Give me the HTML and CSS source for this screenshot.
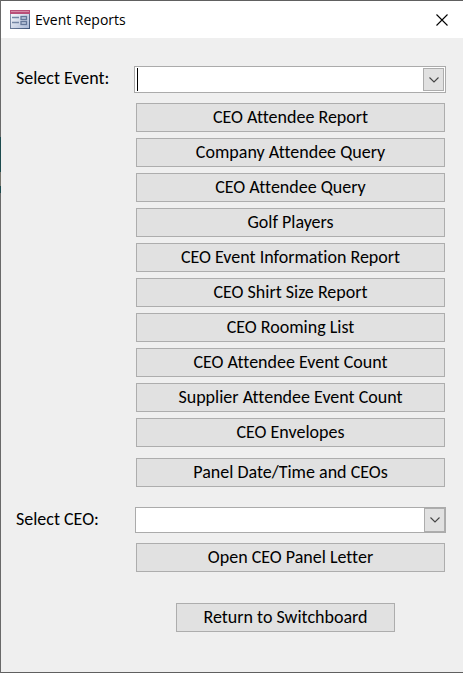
FILE: index.html
```
<!DOCTYPE html>
<html lang="en">
<head>
    <meta charset="utf-8">
    <meta name="viewport" content="width=device-width, initial-scale=1.0">
    <title>Event Reports</title>
    <link rel="stylesheet" href="styles.css">
</head>
<body>

<div class="window">
    <header class="titlebar">
        <svg class="form-icon" width="20" height="19" viewBox="0 0 20 19" aria-hidden="true">
            <defs>
                <linearGradient id="paper" x1="0" y1="0" x2="1" y2="1">
                    <stop offset="0" stop-color="#ffffff"/>
                    <stop offset="1" stop-color="#a9b8d6"/>
                </linearGradient>
                <linearGradient id="frame" x1="0" y1="0" x2="1" y2="1">
                    <stop offset="0" stop-color="#93a1b8"/>
                    <stop offset="1" stop-color="#3f5478"/>
                </linearGradient>
            </defs>
            <rect x="0.5" y="0.5" width="19" height="18" fill="url(#paper)" stroke="url(#frame)"/>
            <rect x="0" y="0" width="20" height="4" fill="#b94f78"/>
            <rect x="1" y="1" width="18" height="1" fill="#d58aa6"/>
            <path d="M2 7.5h7M2 12.5h7" stroke="#7486a5" stroke-width="1.5"/>
            <rect x="11" y="6.5" width="5.5" height="3" fill="#b8c4da" stroke="#647799" stroke-width="1.3"/>
            <rect x="11" y="11.5" width="5.5" height="3" fill="#b8c4da" stroke="#647799" stroke-width="1.3"/>
        </svg>
        <h1>Event Reports</h1>
        <button type="button" class="close" aria-label="Close">
            <svg width="12" height="12" viewBox="0 0 12 12"><path d="M0.5 0.5l11 11M11.5 0.5l-11 11" fill="none" stroke="#000" stroke-width="1.1"/></svg>
        </button>
    </header>

    <form class="reports">
        <label for="event">Select Event:</label>
        <div class="combo combo-active">
            <select id="event"><option></option></select>
            <span class="arrow"><svg width="10" height="6" viewBox="0 0 10 6"><path d="M0.5 0.5L5 5l4.5-4.5" fill="none" stroke="#444" stroke-width="1.1"/></svg></span>
        </div>

        <div class="actions event-actions">
            <button type="button">CEO Attendee Report</button>
            <button type="button">Company Attendee Query</button>
            <button type="button">CEO Attendee Query</button>
            <button type="button">Golf Players</button>
            <button type="button">CEO Event Information Report</button>
            <button type="button">CEO Shirt Size Report</button>
            <button type="button">CEO Rooming List</button>
            <button type="button">CEO Attendee Event Count</button>
            <button type="button">Supplier Attendee Event Count</button>
            <button type="button">CEO Envelopes</button>
            <button type="button" class="panel">Panel Date/Time and CEOs</button>
        </div>

        <label for="ceo">Select CEO:</label>
        <div class="combo">
            <select id="ceo"><option></option></select>
            <span class="arrow"><svg width="10" height="6" viewBox="0 0 10 6"><path d="M0.5 0.5L5 5l4.5-4.5" fill="none" stroke="#444" stroke-width="1.1"/></svg></span>
        </div>

        <div class="actions">
            <button type="button">Open CEO Panel Letter</button>
            <button type="button" class="return">Return to Switchboard</button>
        </div>
    </form>
</div>

</body>
</html>
```
FILE: styles.css
```
* {
    box-sizing: border-box;
}

body {
    margin: 0;
    padding-left: 1px;
    /* desktop showing through along the left edge */
    background: linear-gradient(#696969 137px, #1c4a4e 137px, #1c4a4e 172px, #77756d 172px, #77756d 186px, #1c4a4e 186px, #1c4a4e 193px, #696969 193px);
    font-family: Carlito, Lato, "Liberation Sans", sans-serif;
    font-size: 18px;
    font-variant-ligatures: none;
    color: #000;
}

.window {
    display: flex;
    flex-direction: column;
    min-height: 100vh;
    background-color: #efefef;
    border-top: 1px solid #606060;
    border-bottom: 1px solid #606060;
}

.titlebar {
    display: flex;
    align-items: center;
    height: 37px;
    padding: 0 15px 0 9px;
    background-color: #fff;
}

.titlebar h1 {
    flex: 1;
    margin: 0 0 0 5px;
    font-family: "Open Sans", "Noto Sans", sans-serif;
    font-size: 14px;
    font-weight: 400;
    line-height: 20px;
}

.close {
    display: flex;
    padding: 0;
    border: 0;
    background: none;
}

.reports {
    display: grid;
    grid-template-columns: 118px 1fr;
    padding: 28px 17px 24px 15px;
}

.reports label {
    line-height: 25px;
}

.combo {
    position: relative;
    height: 26px;
    margin-left: 1px;
}

.combo select {
    display: block;
    width: 100%;
    height: 100%;
    padding: 0 28px 0 6px;
    appearance: none;
    background-color: #fff;
    border: 1px solid #ababab;
    border-radius: 0;
    font: inherit;
    outline: none;
}

.combo .arrow {
    position: absolute;
    top: 1px;
    right: 1px;
    bottom: 1px;
    display: flex;
    align-items: center;
    justify-content: center;
    width: 21px;
    background-color: #e1e1e1;
    border: 1px solid #adadad;
    pointer-events: none;
}

.combo-active {
    height: 27px;
    margin-left: 0;
}

/* text cursor of the focused combo box */
.combo-active::before {
    content: "";
    position: absolute;
    top: 2px;
    bottom: 2px;
    left: 3px;
    width: 1px;
    background-color: #000;
}

.combo-active .arrow {
    top: 2px;
    right: 2px;
    bottom: 2px;
}

.actions {
    grid-column: 2;
    display: flex;
    flex-direction: column;
    gap: 6px;
    padding: 10px 1px 0 2px;
}

.event-actions {
    padding-bottom: 20px;
}

.actions button {
    height: 29px;
    padding: 0 0 2px;
    background-color: #e1e1e1;
    border: 1px solid #adadad;
    border-radius: 0;
    font: inherit;
    font-variant-ligatures: none;
    color: inherit;
}

.actions .panel {
    margin-top: 5px;
}

.actions .return {
    margin: 25px 50px 0 40px;
}
```
